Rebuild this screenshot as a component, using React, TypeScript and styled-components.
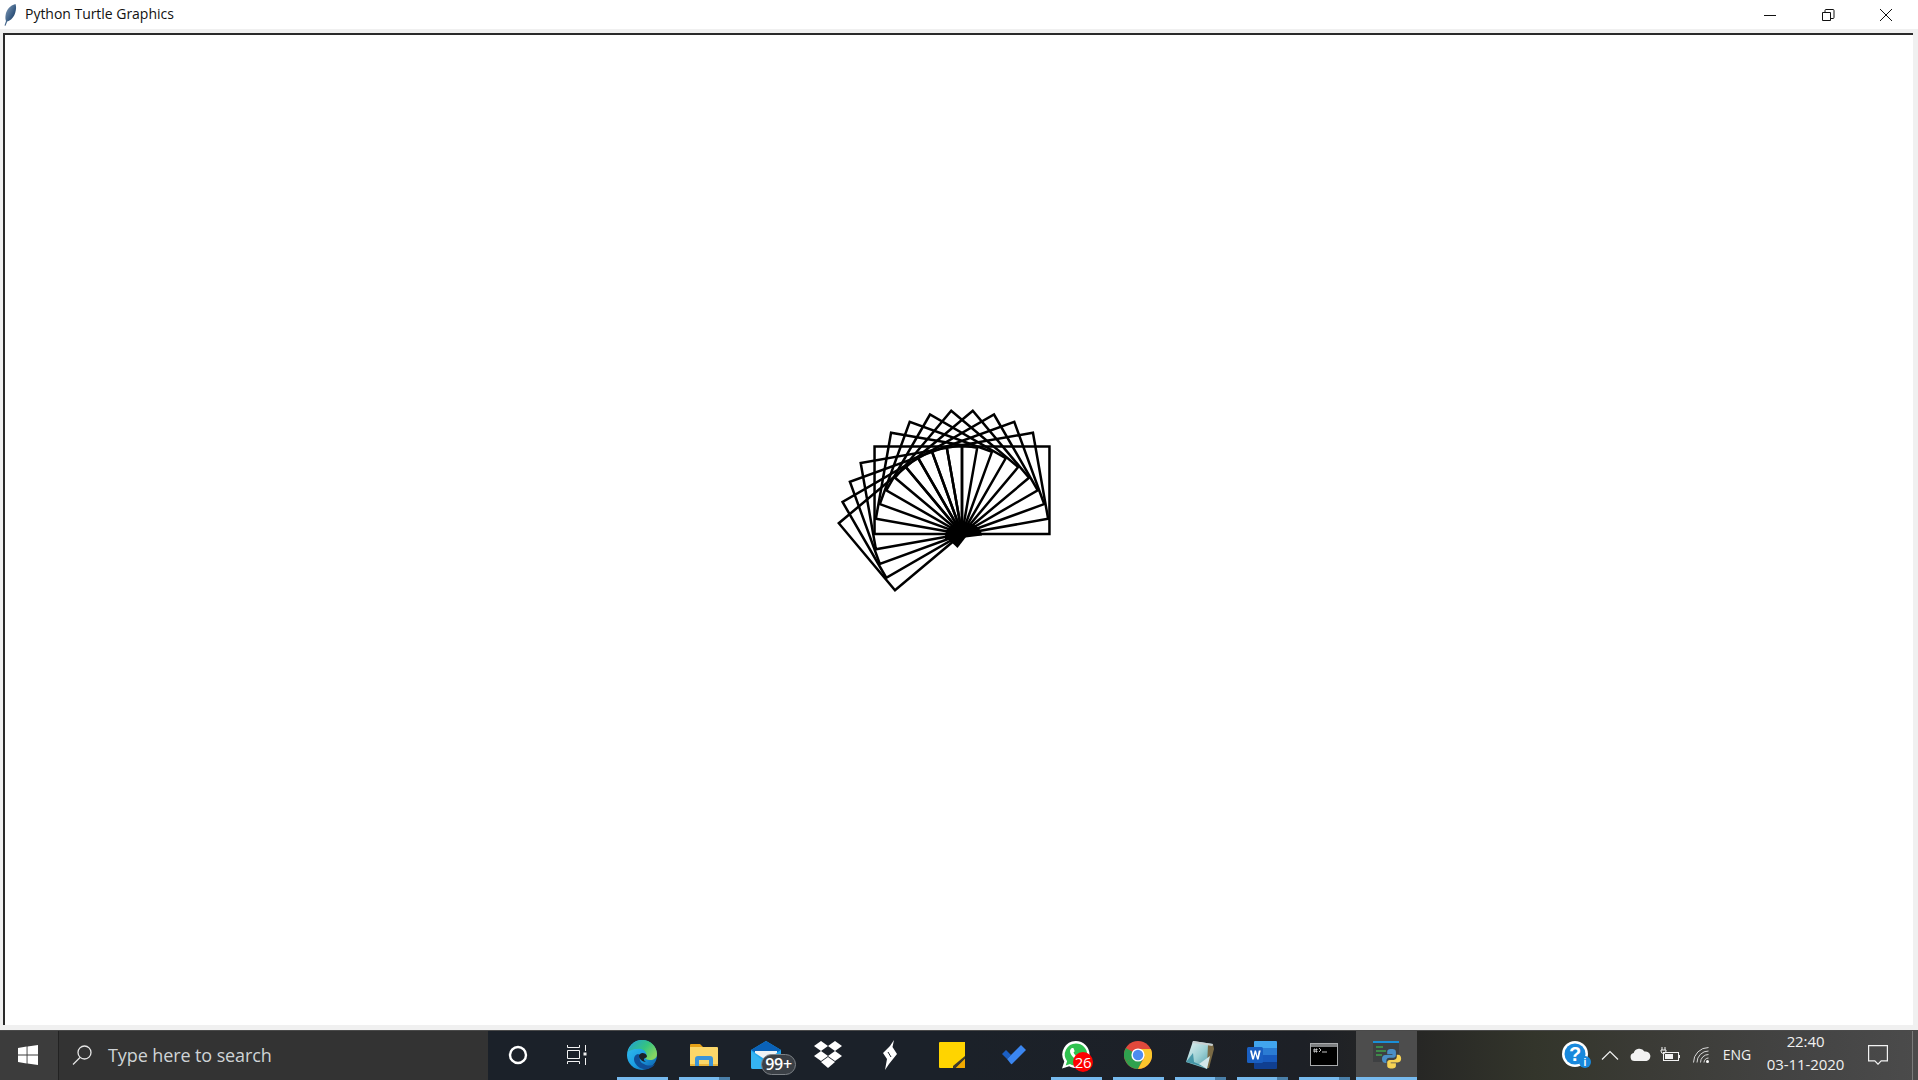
import React from "react";
import styled, { createGlobalStyle } from "styled-components";

const Global = createGlobalStyle`
  html, body, #root { margin: 0; padding: 0; width: 100%; height: 100%; overflow: hidden; }
  body { background: #f0f0f0; font-family: "Open Sans", "Noto Sans", sans-serif; }
`;

const Screen = styled.div`
  width: 1918px;
  height: 1080px;
  display: flex;
  flex-direction: column;
`;

/* ---------- window ---------- */
const TitleBar = styled.header`
  height: 29px;
  flex: none;
  background: #fff;
  display: flex;
  align-items: center;
`;
const AppIcon = styled.svg`
  width: 14px;
  height: 22px;
  margin-left: 3px;
  flex: none;
`;
const TitleText = styled.span`
  margin-left: 8px;
  font-size: 14px;
  color: #111;
  line-height: 27px;
  padding-bottom: 2px;
  flex: 1;
  letter-spacing: -0.03px;
`;
const WinControls = styled.div`
  display: flex;
  height: 29px;
  padding-right: 3px;
`;
const WinButton = styled.div`
  width: 58px;
  height: 29px;
  display: flex;
  align-items: center;
  justify-content: center;
`;
const WinGlyph = styled.svg`
  width: 14px;
  height: 14px;
`;
const ClientArea = styled.main`
  flex: 1;
  min-height: 0;
  background: #f0f0f0;
  padding: 4px 5px 5px 3px;
  display: flex;
`;
const Canvas = styled.div`
  flex: 1;
  background: #fff;
  border-top: 2px solid #2a2a2a;
  border-left: 2px solid #2a2a2a;
  overflow: hidden;
`;
const TurtleSvg = styled.svg`
  display: block;
  width: 100%;
  height: 100%;
`;

/* ---------- taskbar ---------- */
const Taskbar = styled.footer`
  height: 50px;
  flex: none;
  display: flex;
  background: linear-gradient(90deg, #1b2129 0%, #1b2129 50%, #1d2026 68%, #272725 74%, #33352b 80%, #3b3b36 86%, #444 94%, #4b4b4b 100%);
  border-top: 1px solid #4a4a4a;
  box-sizing: border-box;
`;
const StartTile = styled.div`
  width: 58px;
  flex: none;
  background: #3c3c3c;
  display: flex;
  align-items: center;
  justify-content: center;
  padding: 0 2px 2px 0;
  box-sizing: border-box;
`;
const SearchBox = styled.div`
  width: 430px;
  flex: none;
  background: #333;
  border-left: 1px solid #222;
  box-sizing: border-box;
  display: flex;
  align-items: center;
  padding: 0 0 2px 13px;
`;
const SearchText = styled.span`
  margin-left: 16px;
  font-size: 18px;
  color: #cfd3d6;
  letter-spacing: -0.1px;
`;
const SystemButtons = styled.div`
  width: 124px;
  flex: none;
  display: flex;
`;
const SystemButton = styled.div<{ $shift: number }>`
  flex: 1;
  display: flex;
  align-items: center;
  justify-content: center;
  padding: 0 ${(p) => p.$shift}px 2px 0;
`;
const Slot = styled.div<{ $active?: boolean }>`
  position: relative;
  width: ${(p) => (p.$active ? 61 : 62)}px;
  flex: none;
  display: flex;
  align-items: center;
  justify-content: center;
  box-sizing: border-box;
  padding: 0 ${(p) => (p.$active ? 0 : 3)}px 2px 0;
  background: ${(p) => (p.$active ? "#4d4d4d" : "transparent")};
`;
const RunningBar = styled.span<{ $active?: boolean; $stacked?: boolean }>`
  position: absolute;
  left: ${(p) => (p.$active ? 0 : 5)}px;
  right: ${(p) => (p.$active ? 0 : 6)}px;
  bottom: 0;
  height: 3px;
  background: ${(p) =>
    p.$stacked ? "linear-gradient(90deg, #76b9ed 0 40px, #4a7fa8 40px 100%)" : "#76b9ed"};
`;
const Icon = styled.svg<{ $w: number; $h: number }>`
  width: ${(p) => p.$w}px;
  height: ${(p) => p.$h}px;
  display: block;
  flex: none;
`;
const MailBadge = styled.span`
  position: absolute;
  left: 25px;
  top: 23px;
  width: 35px;
  height: 21px;
  box-sizing: border-box;
  border: 1px solid #7d8287;
  border-radius: 11px;
  background: #3b4046;
  color: #fff;
  font-size: 16px;
  font-weight: 600;
  line-height: 19px;
  text-align: center;
  letter-spacing: -0.3px;
`;
const WaBadge = styled.span`
  position: absolute;
  left: 27px;
  top: 21px;
  width: 20px;
  height: 20px;
  border-radius: 50%;
  background: #fe0000;
  color: #fff;
  font-size: 15px;
  line-height: 20px;
  text-align: center;
  letter-spacing: -0.3px;
`;
const Tray = styled.div`
  flex: 1;
  display: flex;
  align-items: center;
  position: relative;
  padding-bottom: 2px;
`;
const TrayItem = styled.div<{ $w: number }>`
  width: ${(p) => p.$w}px;
  flex: none;
  display: flex;
  align-items: center;
  justify-content: center;
  color: #f2f2f2;
`;
const Spacer = styled.div`
  width: 143px;
  flex: none;
`;
const LangText = styled.span`
  font-size: 14px;
  color: #f0f0f0;
  letter-spacing: 0;
`;
const Clock = styled.div`
  width: 95px;
  flex: none;
  display: flex;
  flex-direction: column;
  align-items: center;
  color: #f0f0f0;
  font-size: 15px;
  line-height: 23px;
  letter-spacing: -0.1px;
  margin-top: -3px;
`;
const ShowDesktop = styled.span`
  width: 1px;
  align-self: stretch;
  margin-bottom: -2px;
  background: #7a7a7a;
  margin-left: 10px;
  flex: none;
`;

/* ---------- turtle data ---------- */
const SIDE = 87.5;
const rad = (d: number) => (d * Math.PI) / 180;
const squarePath = (rot: number) => {
  const p = (x: number, y: number) => {
    const c = Math.cos(rad(rot));
    const s = Math.sin(rad(rot));
    return `${(x * c - y * s).toFixed(2)} ${(-(x * s + y * c)).toFixed(2)}`;
  };
  return `M0 0L${p(SIDE, 0)}L${p(SIDE, SIDE)}L${p(0, SIDE)}Z`;
};
const rotations = Array.from({ length: 14 }, (_, i) => i * 10);

const pinned = ["edge", "explorer", "mail", "dropbox", "bolt", "sticky", "todo", "whatsapp", "chrome", "notepad", "word", "cmd"] as const;
type PinnedName = (typeof pinned)[number];
const running: Partial<Record<PinnedName, "single" | "stacked">> = {
  edge: "single",
  explorer: "stacked",
  whatsapp: "single",
  chrome: "single",
  notepad: "stacked",
  word: "stacked",
  cmd: "stacked",
};

const EdgeIcon = () => (
  <Icon $w={32} $h={32} viewBox="0 0 32 32">
    <defs>
      <linearGradient id="edgeA" x1="0" y1="0" x2="1" y2="1">
        <stop offset="0" stopColor="#35c1f1" />
        <stop offset="0.55" stopColor="#1b9de2" />
        <stop offset="1" stopColor="#0c59a4" />
      </linearGradient>
      <linearGradient id="edgeB" x1="0" y1="0" x2="1" y2="0.6">
        <stop offset="0" stopColor="#1f9dd9" />
        <stop offset="0.6" stopColor="#36c47f" />
        <stop offset="1" stopColor="#86d562" />
      </linearGradient>
    </defs>
    <circle cx="16" cy="16" r="15" fill="url(#edgeA)" />
    <path d="M2 13C4 5 10 1 16 1c8 0 15 6 15 14 0 4-3 6-7 6-3 0-5-1-5-3 1-1 2-2 1-4-1-3-5-5-9-4-4 0-8 2-9 3z" fill="url(#edgeB)" />
    <path d="M12 15c-4 1-5 5-3 9 3 5 8 7 13 6 3-1 6-3 7-5-3 2-8 2-11 0-3-1-5-4-4-7 0-1-1-3-2-3z" fill="#0f4f99" />
    <path d="M14 15c2-2 6-1 7 2 0 1-1 2-2 2-2 1-1 3 1 4-3 0-7-3-7-6 0-1 0-1 1-2z" fill="#1b2129" />
  </Icon>
);
const ExplorerIcon = () => (
  <Icon $w={28} $h={24} viewBox="0 0 28 24">
    <path d="M0 2a1 1 0 0 1 1-1h9l3 3H0z" fill="#e6a117" />
    <path d="M0 4h27a1 1 0 0 1 1 1v17a1 1 0 0 1-1 1H1a1 1 0 0 1-1-1z" fill="#fbd769" />
    <path d="M0 21h28v1a1 1 0 0 1-1 1H1a1 1 0 0 1-1-1z" fill="#eab53a" />
    <path d="M5 23v-7a3 3 0 0 1 3-3h12a3 3 0 0 1 3 3v7h-4v-6h-10v6z" fill="#3a94d8" />
  </Icon>
);
const MailIcon = () => (
  <Icon $w={30} $h={28} viewBox="0 0 30 28">
    <path d="M0 9 15 0l15 9v17a2 2 0 0 1-2 2H2a2 2 0 0 1-2-2z" fill="#1fa5ec" />
    <path d="M0 9 15 0l15 9-15 9z" fill="#0a62b8" />
    <path d="M4 10h22v2l-11 7-11-7z" fill="#eef2f5" />
    <path d="M0 10v16a2 2 0 0 0 2 2h20L0 10z" fill="#35b4f2" />
  </Icon>
);
const DropboxIcon = () => (
  <Icon $w={30} $h={27} viewBox="0 0 30 27" fill="#fff">
    <path d="M8 0 15 5 8 10 1 5z" />
    <path d="M22 0 29 5 22 10 15 5z" />
    <path d="M8 10 15 15 8 20 1 15z" />
    <path d="M22 10 29 15 22 20 15 15z" />
    <path d="M8 21 15 16 22 21 15 27z" />
  </Icon>
);
const BoltIcon = () => (
  <Icon $w={14} $h={30} viewBox="0 0 14 30" fill="#fff">
    <path d="M11 0 9.500 7 14 14 6 24 2 30 4 19 0 13 7 6z" />
    <path d="M5 12 8 17" stroke="#1b2129" strokeWidth="1" />
  </Icon>
);
const StickyIcon = () => (
  <Icon $w={26} $h={26} viewBox="0 0 26 26">
    <path d="M1 0h25v25a1 1 0 0 1-1 1H1a1 1 0 0 1-1-1V1a1 1 0 0 1 1-1z" fill="#ffd400" />
    <path d="M26 14v3l-9 9h-3V24z" fill="#3f3a2c" />
    <path d="M26 17v8a1 1 0 0 1-1 1h-8z" fill="#f2a900" />
  </Icon>
);
const TodoIcon = () => (
  <Icon $w={24} $h={20} viewBox="0 0 24 20">
    <path d="M0 9 4 5l5 5-4 4z" fill="#1b5fc4" />
    <path d="M5 14 19 0l5 5L10 19a1 1 0 0 1-1 0z" fill="#3b86f0" />
  </Icon>
);
const WhatsappIcon = () => (
  <Icon $w={28} $h={28} viewBox="0 0 28 28">
    <path d="M14 0a13.5 13.5 0 0 1 0 27c-2.5 0-4.8-.7-6.8-1.8L0 27.5l2.3-7A13.5 13.5 0 0 1 14 0z" fill="#fff" />
    <path d="M14 2.400a11.200 11.200 0 0 1 0 22.400c-2.200 0-4.200-.6-6-1.700l-4.300 1.400 1.400-4.200A11.200 11.200 0 0 1 14 2.400z" fill="#2fc24f" />
    <path d="M10 7c-1 .3-2 1.700-2 3.200 0 3.400 4.800 9 9.500 9.200 1.500 0 3-1 3.200-2.400l-.2-1-3-1.400-1.400 1.600c-1.800-.6-3.800-2.600-4.600-4.600l1.200-1.400-1.300-3.200z" fill="#fff" />
  </Icon>
);
const ChromeIcon = () => (
  <Icon $w={28} $h={28} viewBox="0 0 28 28">
    <circle cx="14" cy="14" r="14" fill="#e2493c" />
    <path d="M14 14 2 21A14 14 0 0 1 1.900 7z" fill="#2fa24e" />
    <path d="M14 14 2 21a14 14 0 0 0 12 7l7-14z" fill="#2fa24e" />
    <path d="M14 8h12.800A14 14 0 0 1 14 28l6.500-12z" fill="#fbc62c" />
    <circle cx="14" cy="14" r="6.600" fill="#fff" />
    <circle cx="14" cy="14" r="5.200" fill="#4d8bf0" />
  </Icon>
);
const NotepadIcon = () => (
  <Icon $w={28} $h={28} viewBox="0 0 28 28">
    <defs>
      <linearGradient id="padG" x1="0" y1="0" x2="1" y2="1">
        <stop offset="0" stopColor="#e9f3f4" />
        <stop offset="0.5" stopColor="#9dd0d4" />
        <stop offset="1" stopColor="#3d8e9e" />
      </linearGradient>
    </defs>
    <path d="M7 0 27 3 21 28 0 21z" fill="url(#padG)" />
    <path d="M22 3h5l1 5-5 19h-2z" fill="#7a6a45" />
    <path d="M0 21 7 12 8 21 19 26z" fill="#1f7d94" opacity=".7" />
    <path d="M13 23 21 28 24 15z" fill="#d3e6ea" />
    <path d="M7 0 27 3 26.500 5 6.500 2z" fill="#c8d0d2" />
  </Icon>
);
const WordIcon = () => (
  <Icon $w={30} $h={28} viewBox="0 0 30 28">
    <path d="M8 0h21a1 1 0 0 1 1 1v7H7V1a1 1 0 0 1 1-1z" fill="#41a5ee" />
    <rect x="7" y="7" width="23" height="7" fill="#2b7cd3" />
    <rect x="7" y="14" width="23" height="7" fill="#185abd" />
    <path d="M7 21h23v6a1 1 0 0 1-1 1H8a1 1 0 0 1-1-1z" fill="#103f91" />
    <rect x="0" y="6" width="16" height="16" rx="1.500" fill="#1a5fc1" />
    <path d="M3 9.500h1.900l1.300 6 1.500-6h1.300l1.500 6 1.300-6H13.700l-2.100 9h-1.500L8.400 12.400 6.800 18.500H5.200z" fill="#fff" />
  </Icon>
);
const CmdIcon = () => (
  <Icon $w={28} $h={23} viewBox="0 0 28 23">
    <rect x="0.500" y="0.500" width="27" height="22" fill="#000" stroke="#a9abad" />
    <rect x="1" y="1" width="26" height="3" fill="#7d7f81" />
    <path d="M4 6h1v3H4zM6 6h1v1H6zM6 8h1v1H6zM9 5l2 2-2 2M12 9h5" fill="none" stroke="#d8d8d8" strokeWidth="0.900" />
  </Icon>
);
const PythonIcon = () => (
  <Icon $w={30} $h={32} viewBox="0 0 30 32">
    <g transform="translate(1 2)">
      <rect x="0" y="0" width="26" height="21" fill="#3e4042" />
      <rect x="0" y="0" width="26" height="2" fill="#1a8fd8" />
      <path d="M3 6h7M3 10h10M3 14h6" stroke="#3fa34d" strokeWidth="1.300" />
      <g transform="translate(2.040 0.170) scale(0.87)">
        <path d="M19 9c-4 0-5 1.500-5 3.500V15h6v1h-8c-3 0-4 2-4 4.500s1 4.500 3.500 4.500H13v-2.500c0-2 1.500-3.500 3.500-3.500H21c2 0 3-1.200 3-3v-3.500C24 10.500 23 9 19 9z" fill="#4a8fc7" />
        <path d="M19 31.500c4 0 5-1.500 5-3.500v-2.500h-6v-1h8c3 0 4-2 4-4.500s-1-4.500-3.500-4.500H25v2.500c0 2-1.500 3.500-3.500 3.500H17c-2 0-3 1.200-3 3V28c0 2 1 3.500 5 3.500z" fill="#f7d354" />
      </g>
    </g>
  </Icon>
);

const pinnedIcons: Record<PinnedName, React.ComponentType> = {
  edge: EdgeIcon,
  explorer: ExplorerIcon,
  mail: MailIcon,
  dropbox: DropboxIcon,
  bolt: BoltIcon,
  sticky: StickyIcon,
  todo: TodoIcon,
  whatsapp: WhatsappIcon,
  chrome: ChromeIcon,
  notepad: NotepadIcon,
  word: WordIcon,
  cmd: CmdIcon,
};

export default function App() {
  return (
    <Screen>
      <Global />
      <TitleBar>
        <AppIcon viewBox="0 0 14 22">
          <defs>
            <linearGradient id="feather" x1="0" y1="0" x2="1" y2="1">
              <stop offset="0" stopColor="#8ea6c0" />
              <stop offset="0.6" stopColor="#33577f" />
              <stop offset="1" stopColor="#1d2c3f" />
            </linearGradient>
          </defs>
          <path d="M12.500 0C7 1.500 3.500 5.500 2.600 11 2.200 13.500 2.400 15.500 3 17l-1.500 4.500 1 .3L4.200 17.500C8 16.500 11 13 12.300 8.500 13.200 5.500 13.400 2.500 12.500 0z" fill="url(#feather)" />
        </AppIcon>
        <TitleText>Python Turtle Graphics</TitleText>
        <WinControls>
          <WinButton>
            <WinGlyph viewBox="0 0 14 14">
              <path d="M1 7.500h12" stroke="#111" fill="none" />
            </WinGlyph>
          </WinButton>
          <WinButton>
            <WinGlyph viewBox="0 0 14 14">
              <path d="M1.500 4.500h8v8h-8zM4 4.500V2.500a1 1 0 0 1 1-1h7a1 1 0 0 1 1 1v7a1 1 0 0 1-1 1H9.500" stroke="#111" fill="none" />
            </WinGlyph>
          </WinButton>
          <WinButton>
            <WinGlyph viewBox="0 0 14 14">
              <path d="M1 1l12 12M13 1 1 13" stroke="#111" fill="none" />
            </WinGlyph>
          </WinButton>
        </WinControls>
      </TitleBar>

      <ClientArea>
        <Canvas>
          <TurtleSvg viewBox="0 0 1909 990">
            <g transform="translate(957.5 499)" fill="none" stroke="#000" strokeWidth="2.500" strokeLinejoin="miter">
              {rotations.map((r) => (
                <path key={r} d={squarePath(r)} />
              ))}
              <path d="M-17 2 -4.500 14 4 3z" fill="#000" stroke="none" />
              <path d="M-17 3A18 13 0 0 1 20 1L20 1.500 -17 6z" fill="#000" stroke="none" />
            </g>
          </TurtleSvg>
        </Canvas>
      </ClientArea>

      <Taskbar>
        <StartTile>
          <Icon $w={20} $h={20} viewBox="0 0 20 20" fill="#fff">
            <path d="M0 2.900 8.600 1.600v8H0zM9.500 1.500 20 0v9.600H9.500zM0 10.500h8.600v8L0 17.100zM9.500 10.500H20V20L9.500 18.500z" />
          </Icon>
        </StartTile>
        <SearchBox>
          <Icon $w={20} $h={20} viewBox="0 0 20 20" fill="none" stroke="#e6e6e6" strokeWidth="1.300">
            <circle cx="12.500" cy="7.500" r="6.500" />
            <path d="M8 12.500 1 19.500" />
          </Icon>
          <SearchText>Type here to search</SearchText>
        </SearchBox>
        <SystemButtons>
          <SystemButton $shift={0}>
            <Icon $w={20} $h={20} viewBox="0 0 20 20" fill="none" stroke="#fff" strokeWidth="2.400">
              <circle cx="10" cy="10" r="8" />
            </Icon>
          </SystemButton>
          <SystemButton $shift={5}>
            <Icon $w={20} $h={20} viewBox="0 0 20 20" fill="none" stroke="#f2f2f2" strokeWidth="1">
              <path d="M0.500 2.500h12M0.500 0v2.500M12.500 0v2.500M0.500 5.500h12v8h-12zM0.500 16.500h12M0.500 16.500V19M12.500 16.500V19M18.500 0v6M18.500 13v7" />
              <rect x="16.500" y="7.500" width="3" height="3" fill="#f2f2f2" stroke="none" />
            </Icon>
          </SystemButton>
        </SystemButtons>
        {pinned.map((name) => {
          const Glyph = pinnedIcons[name];
          const state = running[name];
          return (
            <Slot key={name}>
              <Glyph />
              {name === "mail" && <MailBadge>99+</MailBadge>}
              {name === "whatsapp" && <WaBadge>26</WaBadge>}
              {state && <RunningBar $stacked={state === "stacked"} />}
            </Slot>
          );
        })}
        <Slot $active>
          <PythonIcon />
          <RunningBar $active />
        </Slot>
        <Tray>
          <Spacer />
          <TrayItem $w={33}>
            <Icon $w={32} $h={30} viewBox="0 0 32 30">
              <circle cx="14" cy="14" r="13" fill="#fff" />
              <circle cx="14" cy="14" r="10.500" fill="#1888dc" />
              <text x="14" y="21" textAnchor="middle" fontSize="20" fontWeight="700" fontFamily="Liberation Sans, sans-serif" fill="#fff">?</text>
              <circle cx="24" cy="22" r="6" fill="#1888dc" />
              <text x="24" y="26" textAnchor="middle" fontSize="10" fontWeight="700" fontFamily="Liberation Sans, sans-serif" fill="#fff">i</text>
            </Icon>
          </TrayItem>
          <TrayItem $w={34}>
            <Icon $w={18} $h={10} viewBox="0 0 18 10" fill="none" stroke="#f2f2f2" strokeWidth="1.200">
              <path d="M1 9.500 9 1.500l8 8" />
            </Icon>
          </TrayItem>
          <TrayItem $w={26}>
            <Icon $w={21} $h={13} viewBox="0 0 21 13">
              <path d="M4.500 13a4 4 0 0 1-.8-7.900A6 6 0 0 1 14.500 3.500 4.800 4.800 0 0 1 16.500 13z" fill="#f2f2f2" />
            </Icon>
          </TrayItem>
          <TrayItem $w={33}>
            <Icon $w={20} $h={15} viewBox="0 0 20 15" fill="none" stroke="#f2f2f2">
              <path d="M2 0v3M5 0v3M1 3h5v1a2.500 2.500 0 0 1-5 0zM3.500 6.500v3" strokeWidth="1" />
              <rect x="3.500" y="5.500" width="15" height="8" strokeWidth="1" />
              <rect x="5" y="7" width="8" height="5" fill="#f2f2f2" stroke="none" />
              <rect x="19" y="8" width="1" height="3" fill="#f2f2f2" stroke="none" />
            </Icon>
          </TrayItem>
          <TrayItem $w={30}>
            <Icon $w={17} $h={16} viewBox="0 0 17 16" fill="none" stroke="#d8d8d8" strokeWidth="1">
              <path d="M.5 15.500a15 15 0 0 1 15-15" />
              <path d="M4 15.500a11.500 11.500 0 0 1 11.500-11.500" />
              <path d="M7.500 15.500a8 8 0 0 1 8-8" />
              <path d="M11 15.500a4.500 4.500 0 0 1 4.500-4.500" />
              <circle cx="14.500" cy="14.500" r="1.500" fill="#fff" stroke="none" />
            </Icon>
          </TrayItem>
          <TrayItem $w={42}>
            <LangText>ENG</LangText>
          </TrayItem>
          <Clock>
            <span>22:40</span>
            <span>03-11-2020</span>
          </Clock>
          <TrayItem $w={49}>
            <Icon $w={20} $h={20} viewBox="0 0 20 20" fill="none" stroke="#f2f2f2" strokeWidth="1.200">
              <path d="M.6.600h18.800v15.300h-6.200L10 19.200l-3.200-3.300H.6z" />
            </Icon>
          </TrayItem>
          <ShowDesktop />
        </Tray>
      </Taskbar>
    </Screen>
  );
}
